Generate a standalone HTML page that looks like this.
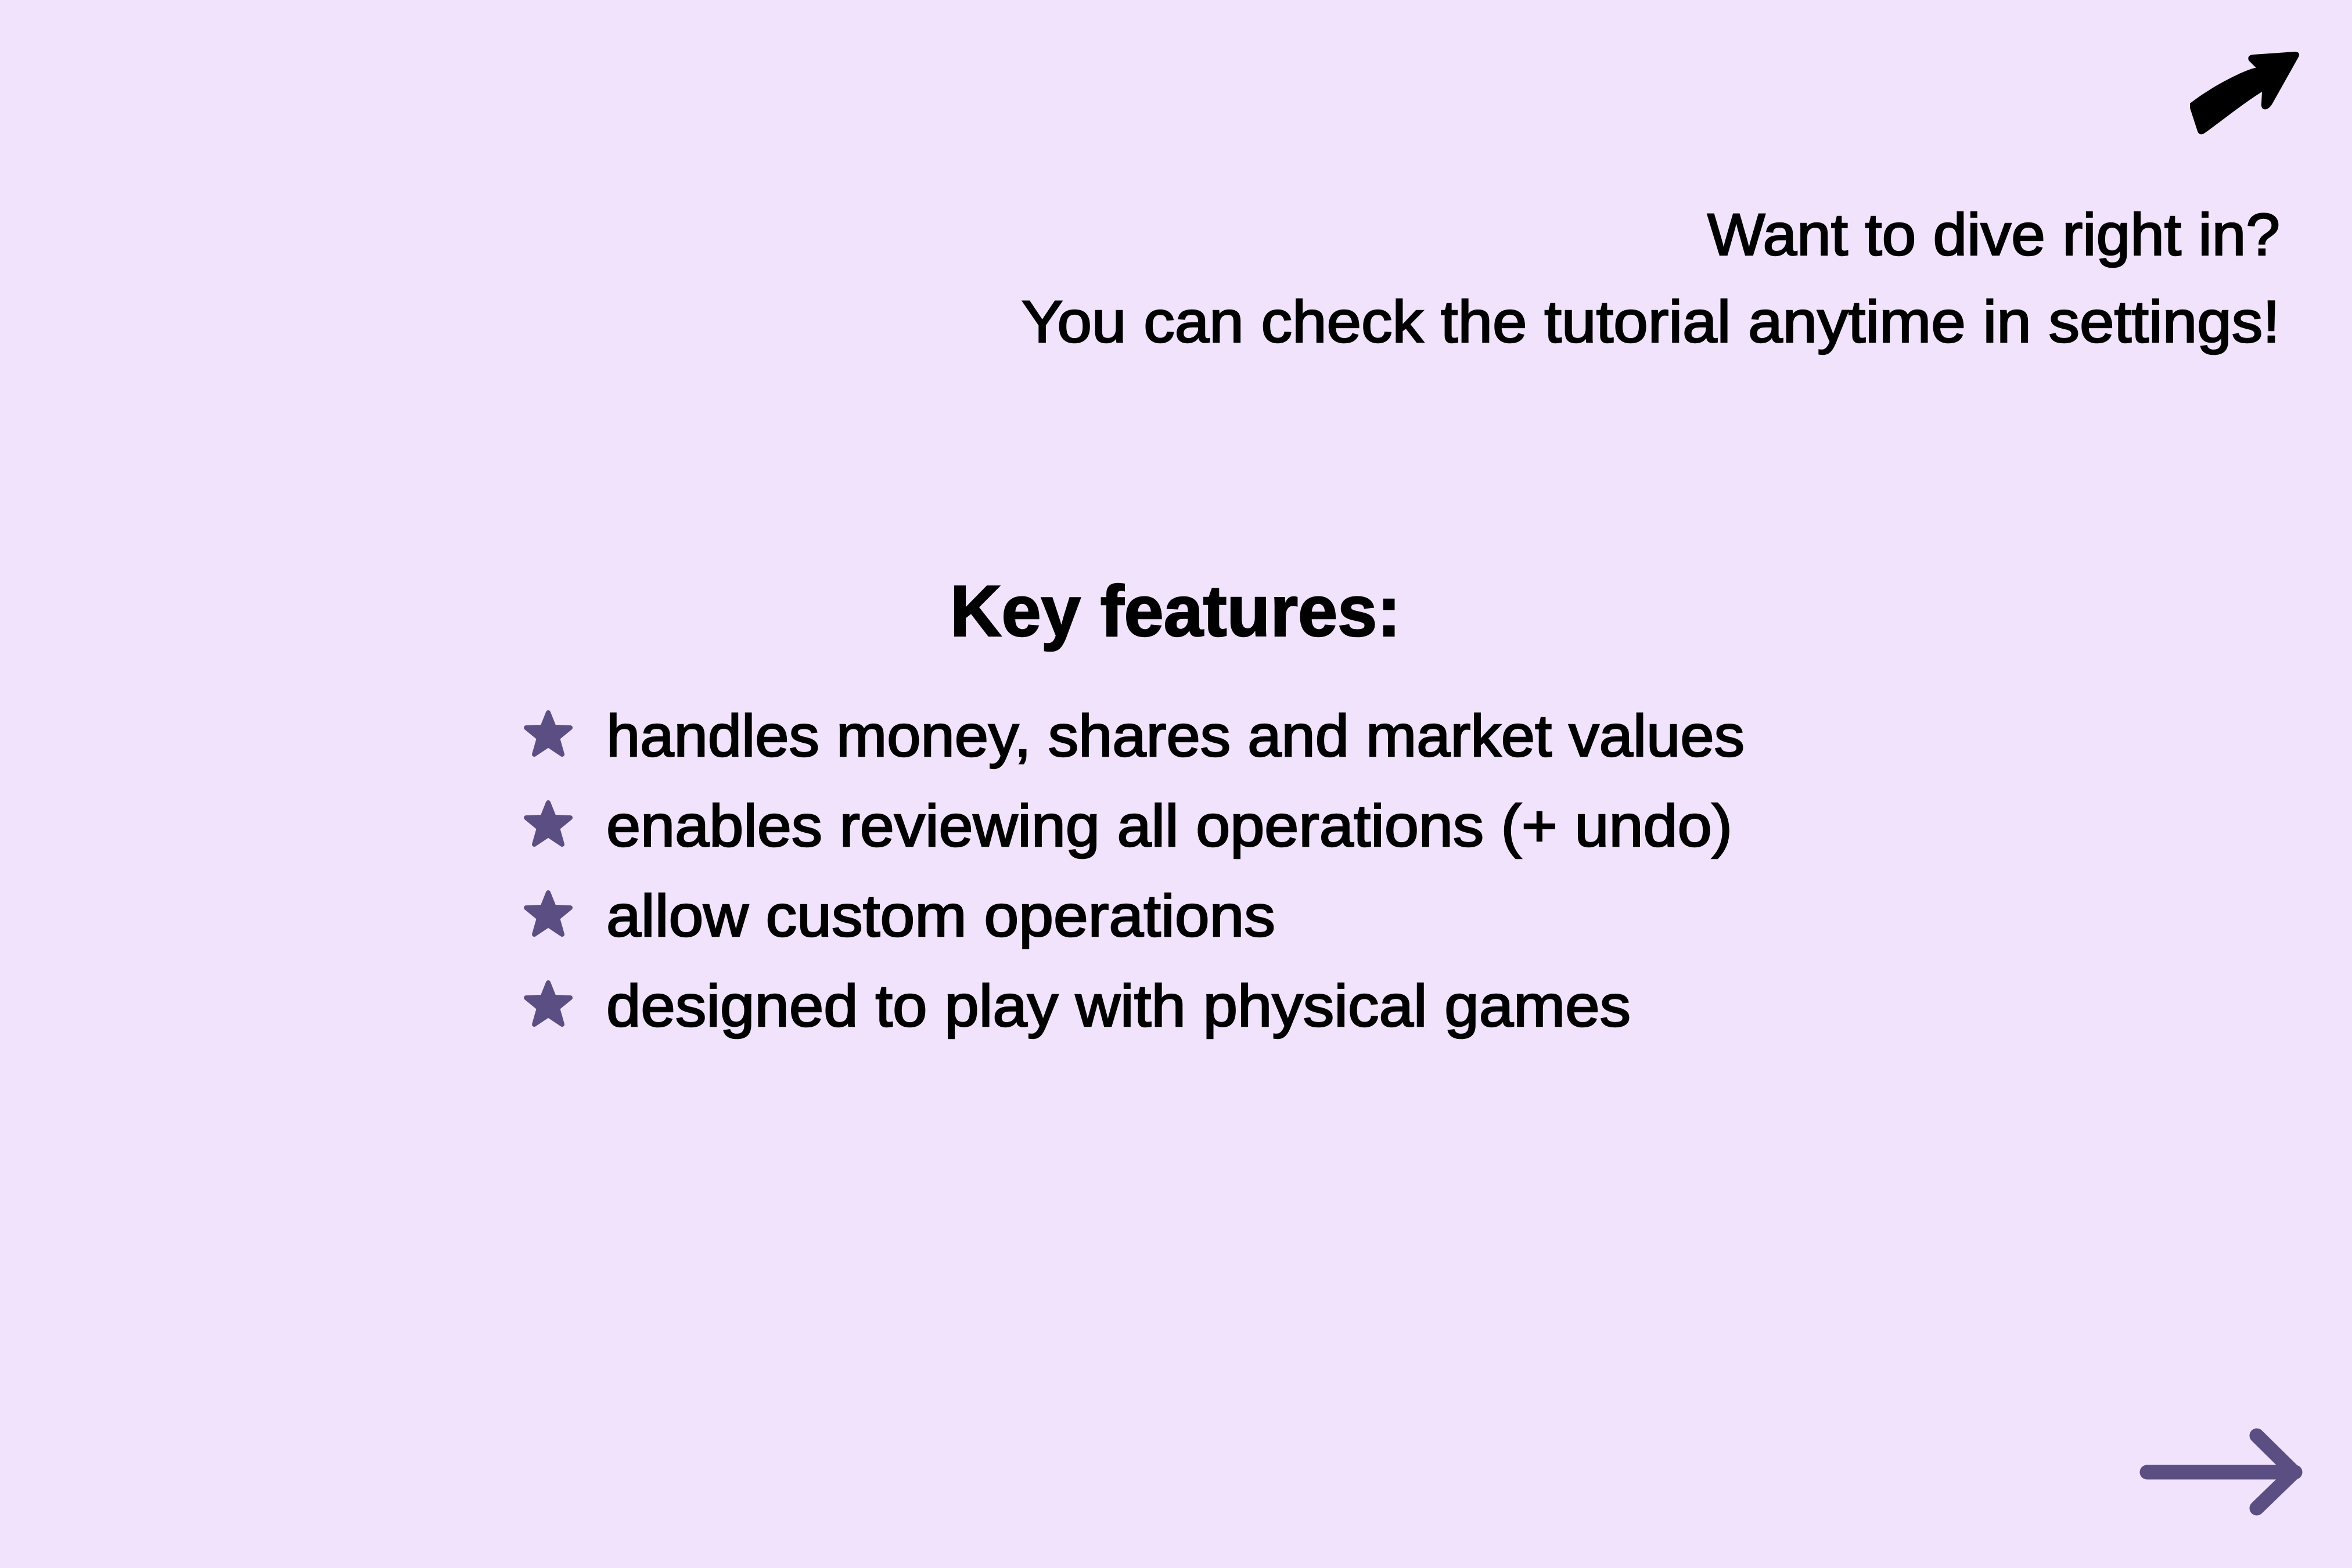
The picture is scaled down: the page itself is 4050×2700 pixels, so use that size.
<!DOCTYPE html>
<html><head><meta charset="utf-8"><style>
html,body{margin:0;padding:0;background:#f0e3fb;}
svg{display:block}
</style></head><body>
<svg width="4050" height="2700" viewBox="0 0 4050 2700" xmlns="http://www.w3.org/2000/svg">
<rect width="4050" height="2700" fill="#f0e3fb"/>
<path d="M3771,178 C3820,140 3880,115 3885,117 L3872,104 Q3869,95 3880,94 L3952,89 Q3962,90 3958,98 L3912,180 Q3905,190 3898,188 Q3893,186 3894,178 L3895,158 C3860,180 3830,205 3795,230 Q3787,234 3784,226 L3771,186 Z" fill="#000"/>
<g font-family="Liberation Sans, sans-serif" fill="#000" stroke="#000" stroke-width="2.5">
<text x="3926" y="439" font-size="102" text-anchor="end" textLength="986" lengthAdjust="spacingAndGlyphs">Want to dive right in?</text>
<text x="3926" y="589" font-size="102" text-anchor="end" textLength="2167" lengthAdjust="spacingAndGlyphs">You can check the tutorial anytime in settings!</text>
<text x="1636" y="1095" font-size="124" font-weight="bold" textLength="776" lengthAdjust="spacingAndGlyphs">Key features:</text>
<text x="1044" y="1302" font-size="102" textLength="1960" lengthAdjust="spacingAndGlyphs">handles money, shares and market values</text>
<text x="1044" y="1457" font-size="102" textLength="1939" lengthAdjust="spacingAndGlyphs">enables reviewing all operations (+ undo)</text>
<text x="1044" y="1612" font-size="102" textLength="1152" lengthAdjust="spacingAndGlyphs">allow custom operations</text>
<text x="1044" y="1767" font-size="102" textLength="1764" lengthAdjust="spacingAndGlyphs">designed to play with physical games</text>
</g>
<defs>
<path id="star" d="M0,-38 L10,-13 L38,-12 L16,6 L24,34 L0,18 L-24,34 L-16,6 L-38,-12 L-10,-13 Z" fill="#5a4e82" stroke="#5a4e82" stroke-width="8" stroke-linejoin="round"/>
</defs>
<use href="#star" x="944" y="1265"/>
<use href="#star" x="944" y="1420"/>
<use href="#star" x="944" y="1575"/>
<use href="#star" x="944" y="1730"/>
<g stroke="#5a4e82" stroke-width="25" stroke-linecap="round" stroke-linejoin="round" fill="none">
<path d="M3697,2535 L3952,2535"/>
<path d="M3886,2472 L3950,2535 L3886,2597"/>
</g>
</svg>
</body></html>
